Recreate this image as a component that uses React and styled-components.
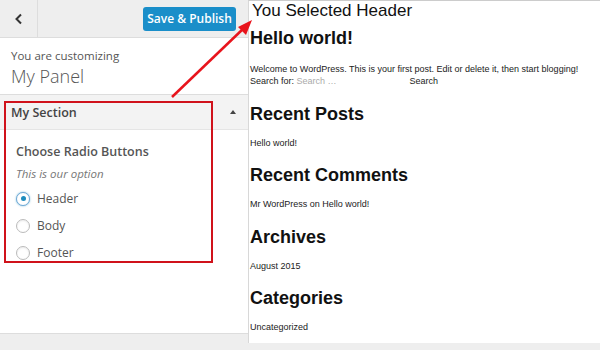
import React from "react";
import styled, { createGlobalStyle } from "styled-components";

const Global = createGlobalStyle`
  html, body { margin: 0; padding: 0; background: #eee; }
  body { width: 600px; height: 350px; overflow: hidden; }
`;

const Page = styled.div`
  position: relative;
  display: flex;
  width: 600px;
  height: 350px;
  background: #eee;
`;

const Sidebar = styled.div`
  width: 248px;
  display: flex;
  flex-direction: column;
  font-family: "Open Sans", "Noto Sans", sans-serif;
  color: #555;
`;

const TopBar = styled.div`
  height: 37px;
  display: flex;
  align-items: center;
  background: #eee;
  border-bottom: 1px solid #ddd;
`;

const BackButton = styled.div`
  width: 37px;
  height: 37px;
  display: flex;
  align-items: center;
  justify-content: center;
  border-right: 1px solid #ddd;
  color: #333;
`;

const PublishButton = styled.div`
  margin-left: auto;
  margin-right: 12px;
  height: 24px;
  width: 93px;
  display: flex;
  align-items: center;
  justify-content: center;
  background: #1a8ec9;
  border-radius: 3px;
  color: #fff;
  font-size: 12px;
  font-weight: 600;
`;

const Info = styled.div`
  background: #fff;
  padding: 10px 11px 8px;
  height: 38px;
  border-bottom: 1px solid #ddd;
`;

const InfoSmall = styled.div`
  font-size: 11.5px;
  line-height: 16px;
`;

const InfoTitle = styled.div`
  font-size: 18px;
  font-weight: 300;
  line-height: 24px;
`;

const SectionHead = styled.div`
  height: 34px;
  display: flex;
  align-items: center;
  justify-content: space-between;
  padding: 0 12px 0 11px;
  background: #f3f3f3;
  border-bottom: 1px solid #e5e5e5;
  font-size: 12.5px;
  font-weight: 600;
  color: #444;
`;

const Caret = styled.span`
  width: 0;
  height: 0;
  border-left: 3.5px solid transparent;
  border-right: 3.5px solid transparent;
  border-bottom: 4px solid #444;
`;

const SectionBody = styled.div`
  flex: 1;
  background: #fff;
  padding: 13px 16px 0;
`;

const ControlTitle = styled.div`
  font-size: 12.5px;
  font-weight: 600;
  line-height: 18px;
`;

const ControlDesc = styled.div`
  font-size: 11.5px;
  font-style: italic;
  color: #777;
  line-height: 16px;
  margin-top: 5px;
`;

const RadioList = styled.div`
  display: flex;
  flex-direction: column;
  gap: 10px;
  margin-top: 8px;
`;

const RadioRow = styled.label`
  display: flex;
  align-items: center;
  gap: 7px;
  font-size: 12px;
  height: 17px;
`;

const RadioCircle = styled.span`
  width: 12px;
  height: 12px;
  border-radius: 50%;
  border: 1px solid ${(p) => (p.$checked ? "#6fa8d6" : "#bbb")};
  box-shadow: ${(p) => (p.$checked ? "0 0 2px rgba(30,140,190,.6)" : "inset 0 1px 2px rgba(0,0,0,.08)")};
  display: flex;
  align-items: center;
  justify-content: center;
  background: #fff;
  &::after {
    content: "";
    width: 5px;
    height: 5px;
    border-radius: 50%;
    background: ${(p) => (p.$checked ? "#1e8cbe" : "transparent")};
  }
`;

const SidebarFooter = styled.div`
  height: 16px;
  background: #eee;
  border-top: 1px solid #ddd;
`;

const Preview = styled.div`
  flex: 1;
  display: flex;
  flex-direction: column;
`;

const PreviewFrame = styled.div`
  height: 343px;
  background: #fff;
  border-left: 1px solid #d8d8d8;
  border-top: 1px solid #ccc;
  box-sizing: border-box;
  padding: 0 0 0 1px;
  font-family: "Liberation Sans", Arial, sans-serif;
  color: #111;
`;

const Banner = styled.div`
  font-size: 17px;
  line-height: 21px;
  margin-top: -1px;
  padding-left: 2px;
`;

const Heading = styled.div`
  font-size: 18px;
  font-weight: bold;
  line-height: 22px;
  margin-top: ${(p) => p.$top}px;
`;

const Small = styled.div`
  font-size: 9px;
  line-height: 12px;
  color: #222;
  margin-top: ${(p) => p.$top || 0}px;
`;

const Muted = styled.span`
  color: #aaa;
  display: inline-block;
  width: 113px;
`;

const Annotation = styled.div`
  position: absolute;
  left: 4px;
  top: 101px;
  width: 205px;
  height: 158px;
  border: 2px solid #d0121b;
  pointer-events: none;
`;

const Arrow = styled.svg`
  position: absolute;
  left: 0;
  top: 0;
  pointer-events: none;
`;

export default function App() {
  return (
    <>
      <Global />
      <Page>
        <Sidebar>
          <TopBar>
            <BackButton>
              <svg width="10" height="12" viewBox="0 0 10 12">
                <path d="M7 1.5 L2.5 6 L7 10.5" fill="none" stroke="#333" strokeWidth="2" />
              </svg>
            </BackButton>
            <PublishButton>Save &amp; Publish</PublishButton>
          </TopBar>
          <Info>
            <InfoSmall>You are customizing</InfoSmall>
            <InfoTitle>My Panel</InfoTitle>
          </Info>
          <SectionHead>
            My Section
            <Caret />
          </SectionHead>
          <SectionBody>
            <ControlTitle>Choose Radio Buttons</ControlTitle>
            <ControlDesc>This is our option</ControlDesc>
            <RadioList>
              {["Header", "Body", "Footer"].map((l, i) => (
                <RadioRow key={l}>
                  <RadioCircle $checked={i === 0} />
                  {l}
                </RadioRow>
              ))}
            </RadioList>
          </SectionBody>
          <SidebarFooter />
        </Sidebar>
        <Preview>
          <PreviewFrame>
            <Banner>You Selected Header</Banner>
            <Heading $top={6}>Hello world!</Heading>
            <Small $top={14}>Welcome to WordPress. This is your first post. Edit or delete it, then start blogging!</Small>
            <Small>
              Search for: <Muted>Search …</Muted>Search
            </Small>
            <Heading $top={16}>Recent Posts</Heading>
            <Small $top={12}>Hello world!</Small>
            <Heading $top={15}>Recent Comments</Heading>
            <Small $top={12}>Mr WordPress on Hello world!</Small>
            <Heading $top={15.5}>Archives</Heading>
            <Small $top={12}>August 2015</Small>
            <Heading $top={15.5}>Categories</Heading>
            <Small $top={12}>Uncategorized</Small>
          </PreviewFrame>
        </Preview>
        <Annotation />
        <Arrow width="600" height="350">
          <line x1="172" y1="97" x2="244" y2="28" stroke="#e8141c" strokeWidth="2.5" />
          <polygon points="252,20 238,27 246,35" fill="#e8141c" />
        </Arrow>
      </Page>
    </>
  );
}
